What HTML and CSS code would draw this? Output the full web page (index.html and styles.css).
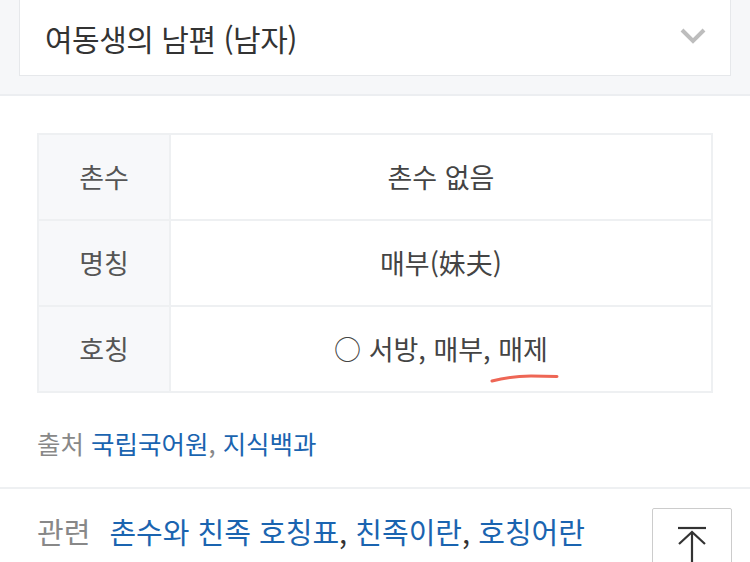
FILE: index.html
```html
<!DOCTYPE html>
<html lang="ko">
<head>
    <meta charset="UTF-8">
    <meta name="viewport" content="width=device-width, initial-scale=1.0">
    <title>여동생의 남편</title>
    <link rel="stylesheet" href="styles.css">
</head>
<body>

    <!-- 관계 선택 -->
    <div class="select-area">
        <div class="select-box">
            <span class="select-text">여동생의 남편 (남자)</span>
            <svg class="chevron" width="26" height="16" viewBox="0 0 26 16">
                <path d="M2 2 L13 13 L24 2" fill="none" stroke="#bdbdbd" stroke-width="4"/>
            </svg>
        </div>
    </div>

    <!-- 결과 표 -->
    <div class="content">
        <table class="result-table">
            <tr>
                <th>촌수</th>
                <td>촌수 없음</td>
            </tr>
            <tr>
                <th>명칭</th>
                <td>매부(妹夫)</td>
            </tr>
            <tr>
                <th>호칭</th>
                <td>○ 서방, 매부, <span class="mark">매제<svg class="underline" width="72" height="10" viewBox="0 0 72 10"><path d="M3 7 Q22 2 42 2 L68 2.5" fill="none" stroke="#ee6655" stroke-width="3" stroke-linecap="round"/></svg></span></td>
            </tr>
        </table>

        <p class="source">출처 <a href="#">국립국어원</a>, <a href="#">지식백과</a></p>
    </div>

    <div class="related">
        <span class="related-label">관련</span>
        <span class="related-links"><a href="#">촌수와 친족 호칭표</a>, <a href="#">친족이란</a>, <a href="#">호칭어란</a></span>
    </div>

    <button class="top-btn" type="button">
        <svg width="32" height="40" viewBox="0 0 32 40">
            <path d="M2 2 H30" stroke="#333" stroke-width="2.2" fill="none"/>
            <path d="M3 18 L16 6 L29 18 M16 6 V40" stroke="#333" stroke-width="2.2" fill="none"/>
        </svg>
    </button>

</body>
</html>
```

FILE: styles.css
```css
* {
    margin: 0;
    padding: 0;
    box-sizing: border-box;
    font-family: "Noto Sans CJK KR", "Noto Sans", sans-serif;
}

body {
    background: #fff;
    overflow: hidden;
}

a {
    color: #1a64b0;
    text-decoration: none;
}

.select-area {
    background: #f6f7f9;
    padding: 0 19px 18px;
    border-bottom: 2px solid #eceef1;
}

.select-box {
    height: 76px;
    display: flex;
    align-items: center;
    justify-content: space-between;
    padding: 0 24px 0 25px;
    background: #fff;
    border: 1px solid #e6e8eb;
    border-top: none;
}

.select-text {
    font-size: 30px;
    line-height: 40px;
    color: #333;
    letter-spacing: -0.5px;
}

.chevron {
    margin-top: -4px;
}

.content {
    padding: 37px 37px 0;
    border-bottom: 2px solid #eef0f2;
}

.result-table {
    width: 676px;
    border-collapse: collapse;
}

.result-table th,
.result-table td {
    height: 86px;
    border: 2px solid #eef0f2;
    font-size: 27px;
    line-height: 40px;
    font-weight: 400;
    color: #444;
    text-align: center;
}

.result-table th {
    width: 132px;
    background: #f7f8fa;
    color: #555;
}

.mark {
    position: relative;
}

.underline {
    position: absolute;
    left: -9px;
    top: 45px;
}

.source {
    margin-top: 30px;
    padding-bottom: 24px;
    line-height: 40px;
    font-size: 25.5px;
    color: #888;
}

.related {
    display: flex;
    gap: 19px;
    padding: 22px 37px 0;
    line-height: 40px;
    font-size: 29px;
}

.related-label {
    color: #888;
}

.related-links {
    color: #333;
}

.top-btn {
    position: fixed;
    right: 18px;
    top: 508px;
    width: 80px;
    height: 80px;
    display: flex;
    justify-content: center;
    padding-top: 17px;
    background: #fff;
    border: 1px solid #ccc;
    border-radius: 2px;
}
```
